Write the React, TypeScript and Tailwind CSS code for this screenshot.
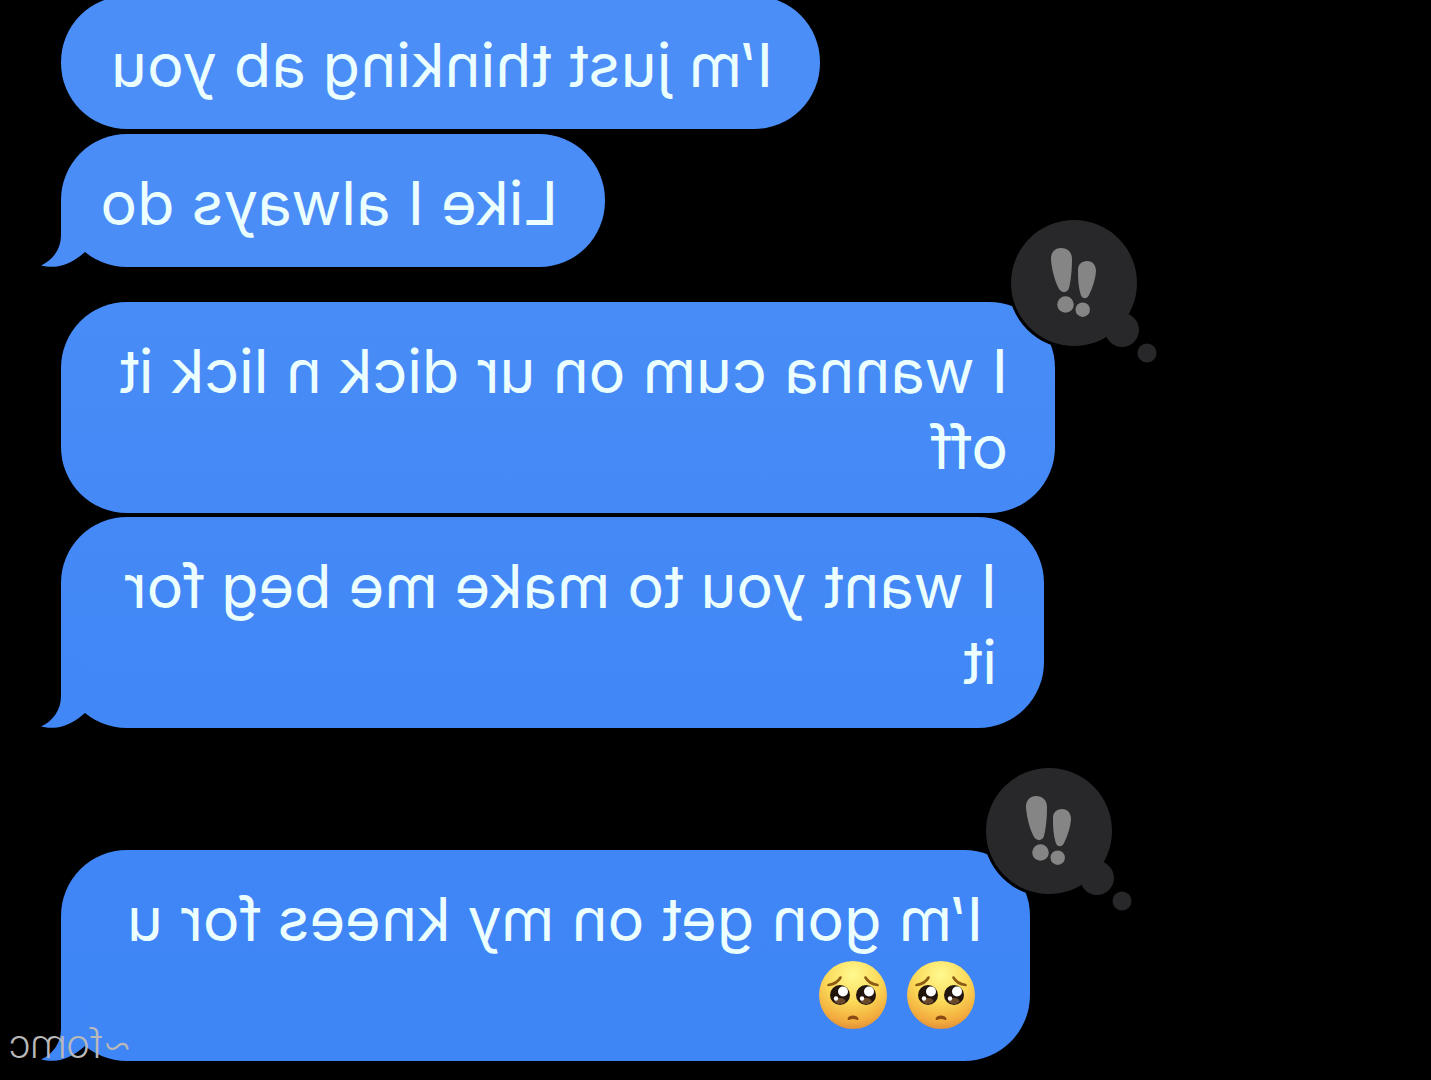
import React from "react";

function Tail({ color }: { color: string }) {
  return (
    <svg
      className="absolute -right-[20px] bottom-0"
      width="60"
      height="68"
      viewBox="0 0 60 68"
      aria-hidden="true"
    >
      <path
        d="M20 0H40V36C40 50 48 61 60 66.500C54 68 49 68 44 67.500C33 66 24 60 16 53Z"
        fill={color}
      />
    </svg>
  );
}

function Emphasis() {
  return (
    <svg
      className="absolute -left-[103px] -top-[86px]"
      width="153"
      height="150"
      viewBox="0 0 153 150"
      role="img"
      aria-label="Emphasized"
    >
      <circle cx="84" cy="67" r="66" fill="#000" />
      <g fill="#28282a">
        <circle cx="84" cy="67" r="63" />
        <circle cx="36" cy="114" r="17" />
        <circle cx="11" cy="137" r="9.5" />
      </g>
      <g fill="#858585">
        <path d="M97 32C103.500 32 107.500 37 107 44C106 55 103 65 99.500 72C97 77.500 90.500 77.500 89 72C87 64 86 53 86 43C86 36 90.500 32 97 32Z" />
        <circle cx="92.500" cy="88.500" r="8.300" />
        <path d="M71 45C76.500 45 80 48.500 80 54C80.200 62 79.500 71 77.500 78C76 83.500 71 83.500 69 79C65.500 72 62.500 63 62 55C62 49 65.500 45 71 45Z" />
        <circle cx="75.300" cy="93.700" r="7.200" />
      </g>
    </svg>
  );
}

function PleadingFace() {
  return (
    <svg width="70" height="70" viewBox="0 0 70 70" role="img" aria-label="Pleading face">
      <defs>
        <radialGradient id="face" cx="0.5" cy="0.2" r="0.82">
          <stop offset="0" stopColor="#fff98f" />
          <stop offset="0.5" stopColor="#fbd958" />
          <stop offset="0.85" stopColor="#f2ab3d" />
          <stop offset="1" stopColor="#df8c38" />
        </radialGradient>
      </defs>
      <circle cx="35" cy="35" r="34" fill="url(#face)" />
      <g fill="none" stroke="#8b5a14" strokeWidth="2.600" strokeLinecap="round">
        <path d="M10.500 25C15.500 24.500 20 22 22.500 17.500" />
        <path d="M59.500 25C54.500 24.500 50 22 47.500 17.500" />
      </g>
      <g fill="#21150e">
        <circle cx="22" cy="35" r="10" />
        <circle cx="48" cy="35" r="10" />
      </g>
      <g fill="#6b4a2c">
        <ellipse cx="22" cy="41" rx="5.500" ry="3" />
        <ellipse cx="48" cy="41" rx="5.500" ry="3" />
      </g>
      <g fill="#fff">
        <circle cx="19" cy="31.500" r="5" />
        <circle cx="45" cy="31.500" r="5" />
        <circle cx="26" cy="38.500" r="2.200" />
        <circle cx="52" cy="38.500" r="2.200" />
      </g>
      <path
        d="M30.500 59C31.500 55.500 38.500 55.500 39.500 59C37 57.800 33 57.800 30.500 59Z"
        fill="#8a4a16"
        stroke="#8a4a16"
        strokeWidth="2"
        strokeLinejoin="round"
      />
    </svg>
  );
}

type BubbleProps = {
  className: string;
  tail?: string;
  emphasized?: boolean;
  children: React.ReactNode;
};

function Bubble({ className, tail, emphasized, children }: BubbleProps) {
  return (
    <li
      className={`relative max-w-full whitespace-nowrap rounded-[66px] pl-[47px] pt-[31px] ${className}`}
    >
      {tail && <Tail color={tail} />}
      <div className="relative">{children}</div>
      {emphasized && <Emphasis />}
    </li>
  );
}

export default function App() {
  return (
    <main className="relative min-h-screen -scale-x-100 overflow-hidden bg-black font-['Inter',sans-serif] text-[61px] leading-[76px] text-[#ecffff]">
      <ul className="-mt-[4px] flex flex-col items-end pr-[61px] pb-[19px]">
        <Bubble className="w-[759px] bg-[#4b8ef7] pb-[26px]">I’m just thinking ab you</Bubble>
        <Bubble className="mt-[5px] w-[544px] bg-[#4a8df7] pb-[26px]" tail="#4a8df7">
          Like I always do
        </Bubble>
        <Bubble
          className="mt-[35px] w-[994px] bg-linear-to-b from-[#488cf7] to-[#4489f6] pb-[28px]"
          emphasized
        >
          I wanna cum on ur dick n lick it
          <br />
          off
        </Bubble>
        <Bubble
          className="mt-1 w-[983px] bg-linear-to-b from-[#4489f6] to-[#4187f6] pb-[28px]"
          tail="#4187f6"
        >
          I want you to make me beg for
          <br />
          it
        </Bubble>
        <Bubble
          className="mt-[122px] w-[969px] bg-linear-to-b from-[#4086f6] to-[#3e85f6] pb-[28px]"
          tail="#3e85f6"
          emphasized
        >
          I’m gon get on my knees for u
          <span className="ml-[7px] flex h-[76px] items-center gap-[18px]">
            <PleadingFace />
            <PleadingFace />
          </span>
        </Bubble>
      </ul>
      <p className="absolute right-[9px] bottom-[12px] font-['Roboto',sans-serif] text-[41px] leading-[48px] font-light text-[#b9b9b9]">
        ~fomc
      </p>
    </main>
  );
}
